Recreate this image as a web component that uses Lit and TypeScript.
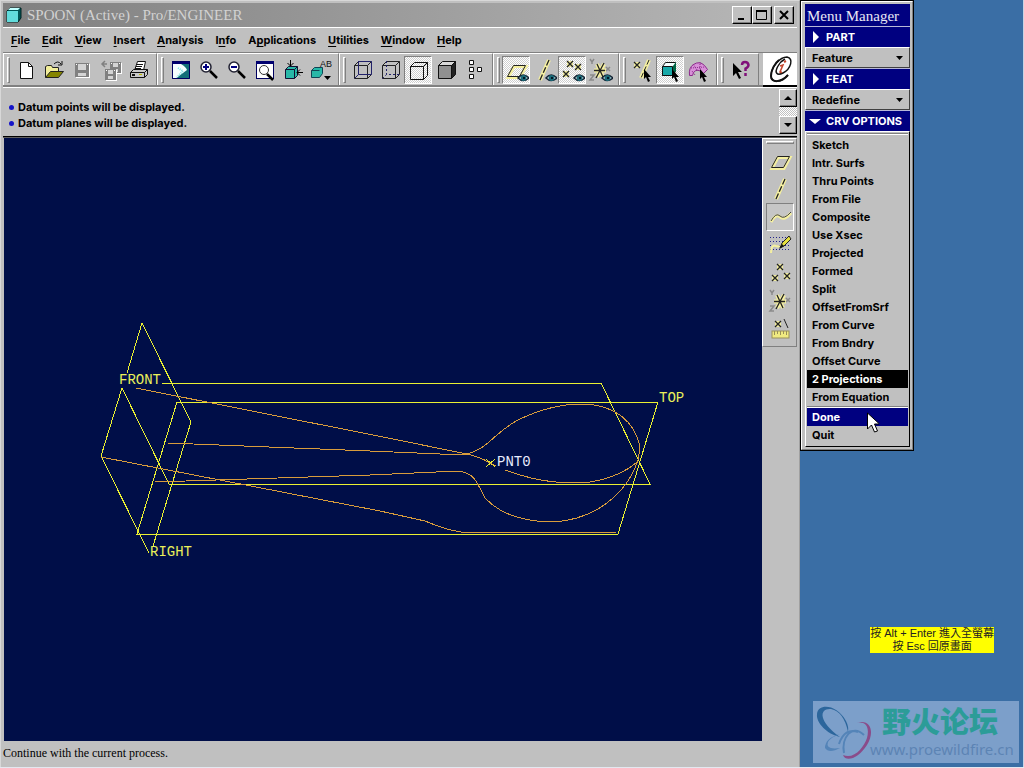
import { LitElement, html, svg, css, nothing, type SVGTemplateResult } from "lit";
import { customElement, property, state } from "lit/decorators.js";
import { classMap } from "lit/directives/class-map.js";

/* ---------- icon artwork, every glyph on a 28 x 28 button face ---------- */

const eye = svg`
  <path d="M16 22Q21 16 27 22Q21 27 16 22Z" fill="#e8f4f4" stroke="#123" stroke-width="1.500"/>
  <circle cx="21.500" cy="22" r="3" fill="#1c6a78"/><rect x="21" y="21" width="2" height="2" fill="#001828"/>`;
const cursor = svg`<path d="M16 13v10l2-2 2 5 2-1-2-4h3z" fill="#000"/>`;

const cross = (x: number, y: number) => svg`
  <rect x="${x}" y="${y}" width="6" height="6" fill="#f1eda0"/>
  <path d="M${x} ${y}l6 6m0-6l-6 6" stroke="#222" stroke-width="1.300" fill="none"/>`;

const axes = svg`
  <path d="M8 14.500h12M11 8l6 13M18 8l-7 13" stroke="#f5f0a0" stroke-width="4" fill="none"/>
  <path d="M8 14.500h11M11 8l6 13M18 7l-8 15" stroke="#222" stroke-width="1.300" fill="none"/>
  <path d="M4 3l2 3 2-3m-2 3v2M20 11l4 4m0-4l-4 4M4 19h4l-4 5h4" stroke="#8a8a8a" fill="none" stroke-width="1.500"/>`;

const disk = (x: number, y: number, s: number) => svg`
  <rect x="${x + 1}" y="${y + 1}" width="${s}" height="${s}" fill="#fff"/>
  <rect x="${x}" y="${y}" width="${s}" height="${s}" fill="#808080"/>
  <rect x="${x + 3}" y="${y + 1}" width="${s - 6}" height="${Math.floor(s / 2) - 1}" fill="#d4d4d4"/>
  <rect x="${x + 3}" y="${y + s - 4}" width="${s - 6}" height="3" fill="#d4d4d4"/>
  <rect x="${x + 1}" y="${y + 1}" width="1" height="1" fill="#fff"/>
  <rect x="${x + s - 2}" y="${y + 1}" width="1" height="1" fill="#fff"/>`;

const lens = (plus: boolean) => svg`
  <circle cx="12" cy="11" r="5" fill="#fff" stroke="#223" stroke-width="1.500"/>
  <path d="M9 11h6" stroke="#000080" stroke-width="2"/>
  ${plus ? svg`<path d="M12 8v6" stroke="#000080" stroke-width="2"/>` : nothing}
  <path d="M16 15l7 7" stroke="#000" stroke-width="2.500"/>`;

const cubeFrame = svg`<path d="M6.500 9.500h13v13h-13zM6.500 9.500l4-4M19.500 9.500l4-4M19.500 22.500l4-4" fill="none" stroke="#222" stroke-width="1"/>`;
const plane = svg`
  <path d="M6 21.500h12l6-11h-12z" fill="none" stroke="#f5f0a0" stroke-width="3"/>
  <path d="M5.500 20.500h12l6-11h-12z" fill="none" stroke="#222" stroke-width="1"/>`;
const axisLine = svg`
  <path d="M19 4l-9 20" stroke="#f5f0a0" stroke-width="4"/>
  <path d="M19 4l-9 20" stroke="#222" stroke-dasharray="6 2" stroke-width="1.300"/>`;

const icons: Record<string, SVGTemplateResult> = {
  blank: svg`<path d="M8.500 6.500h8l4 4v12h-12z" fill="#fff" stroke="#111"/><path d="M16.500 6.500v4h4" fill="none" stroke="#111"/>`,
  open: svg`
    <path d="M5.500 21.500v-11l2-1h4l1 2h6v4" fill="#f2ee9a" stroke="#222"/>
    <path d="M5.500 21.500l5-6h13l-5 6z" fill="#858500" stroke="#222"/>
    <path d="M14 8q4-4 7 0m1-3v4h-4" fill="none" stroke="#111"/>`,
  save: disk(7, 7, 14),
  backup: svg`${disk(14, 6, 11)}${disk(9, 13, 11)}<path d="M6 8h5m-2-3l-3 3 3 3" stroke="#808080" fill="none" stroke-width="1.500"/>`,
  print: svg`
    <path d="M10.500 14.500l3-9h8l-2 9z" fill="#fff" stroke="#111"/>
    <path d="M13 8.500h6m-7 2h6m-7 2h6" stroke="#111"/>
    <path d="M6.500 16.500l3-3h14v5l-3 3h-14z" fill="#c8c8c8" stroke="#111"/>
    <path d="M6.500 16.500h14v5m0-5l3-3" fill="none" stroke="#111"/>
    <rect x="8" y="18" width="3" height="2" fill="#111"/><rect x="15" y="18" width="3" height="1" fill="#bb0"/>`,
  repaint: svg`
    <rect x="6" y="5" width="18" height="18" fill="#127078"/><rect x="6" y="5" width="18" height="3" fill="#000070"/>
    <path d="M7 8h8q5 3 6 6l-12 9H7z" fill="#f6ffff"/><path d="M12 12l5 3-6 6" fill="none" stroke="#7de4e4" stroke-dasharray="1 1" stroke-width="2"/>
    <path d="M6.500 5.500h17v17h-17z" fill="none" stroke="#000060"/>`,
  zoomIn: lens(true),
  zoomOut: lens(false),
  refit: svg`
    <rect x="6.500" y="5.500" width="17" height="17" fill="#fff" stroke="#000060"/><rect x="6" y="5" width="18" height="3" fill="#000070"/>
    <circle cx="14" cy="14" r="4.500" fill="#fff" stroke="#333"/><path d="M17 18l6 6" stroke="#000" stroke-width="2.500"/>`,
  orient: svg`
    <path d="M7.500 13.500l3-3h9v9l-3 3h-9z" fill="#28b8a8" stroke="#113"/><path d="M7.500 13.500h9v9m0-9l3-3" fill="none" stroke="#113"/>
    <path d="M12.500 4v6m-3-3l3 3 3-3M25 16.500h-6m3-3l-3 3 3 3" fill="none" stroke="#000"/>`,
  views: svg`
    <path d="M5.500 14.500l3-3h8v6l-3 4h-8z" fill="#28b8a8" stroke="#145"/><path d="M5.500 14.500h8" stroke="#145"/>
    <path d="M18 20h7l-3.500 4z" fill="#000"/><text x="14" y="11" font-size="9" fill="#111">AB</text>`,
  wire: svg`${cubeFrame}<path d="M10.500 5v13.500h13M6.500 22.500l4-4M10.500 5.500h13v13" fill="none" stroke="#22226a"/>`,
  hidden: svg`${cubeFrame}<path d="M10.500 5.500h13v13" fill="none" stroke="#222"/><path d="M10.500 5v13.500h13M6.500 22.500l4-4" fill="none" stroke="#22226a" stroke-dasharray="2 2"/>`,
  noHidden: svg`<path d="M6.500 10.500h13v13h-13zM6.500 10.500l4-4M19.500 10.500l4-4M19.500 23.500l4-4M10.500 6.500h13v13" fill="none" stroke="#111"/>`,
  shade: svg`
    <path d="M6.500 9.500l4-4h13l-4 4z" fill="#d8d8d8" stroke="#111"/><path d="M19.500 9.500l4-4v13l-4 4z" fill="#222" stroke="#111"/>
    <path d="M6.500 9.500h13v13h-13z" fill="#909090" stroke="#111"/>`,
  tree: svg`<path d="M9.500 4.500h4v4h-4zM9.500 11.500h4v4h-4zM9.500 18.500h4v4h-4zM17.500 11.500h4v4h-4z" fill="#fff" stroke="#111"/>`,
  planeEye: svg`${plane}${eye}`,
  axisEye: svg`${axisLine}${eye}`,
  pointEye: svg`${cross(9, 5)}${cross(17, 8)}${cross(5, 15)}${eye}`,
  csysEye: svg`${axes}${eye}`,
  pickDatum: svg`${cross(6, 6)}<path d="M21 4l-8 18" stroke="#f5f0a0" stroke-width="4"/><path d="M21 4l-8 18" stroke="#222" stroke-dasharray="5 2"/>${cursor}`,
  pickPart: svg`
    <path d="M6.500 10.500l3-4h10v9l-3 4h-10z" fill="#f4ffff" stroke="#111"/><path d="M6.500 10.500h10v9h-10z" fill="#18a8a8" stroke="#111"/>
    <path d="M17 10l3-4v9l-3 4z" fill="#064"/>${cursor}`,
  pickSurface: svg`
    <path d="M5.500 19.500q-1-8 4-11q6-4 11 1l3 4-4 4q-6-6-10-1l-1 3z" fill="#d890d8" stroke="#8c2a8c"/>
    <path d="M7 12l14-1M9 8l4 6m3-8v7m-8 2l3 4" fill="none" stroke="#8c2a8c" stroke-dasharray="1 1"/>${cursor}`,
  help: svg`<path d="M7 7v13l3-3 3 6 2-1-3-6h4z" fill="#000"/><path d="M16 9q0-3 3-3t3.500 3q0 2-3 3.500V15m0 2v3" fill="none" stroke="#80107a" stroke-width="2.500"/>`,
  plane,
  axisLine,
  curve: svg`<path d="M5 19q5-9 9-5t11-4" fill="none" stroke="#f5f0a0" stroke-width="3"/><path d="M5 18q5-9 9-5t11-4" fill="none" stroke="#444"/>`,
  sketchCurve: svg`
    <path d="M4 6.500h20M4 10.500h20M4 14.500h20M4 18.500h20" stroke="#22228a" stroke-dasharray="1 2"/>
    <path d="M5 22q0-9 5-7t9-3" fill="none" stroke="#f5f0a0" stroke-width="2"/>
    <path d="M14 17l2-5 7-7 2 3-7 7z" fill="#e6e040" stroke="#222"/><path d="M13 18l3-5 2 2z" fill="#111"/>`,
  points: svg`${cross(11, 5)}${cross(6, 16)}${cross(18, 14)}`,
  csys: axes,
  analysis: svg`${cross(9, 6)}<path d="M18 4l4 9" stroke="#222"/>
    <rect x="6" y="16" width="17" height="7" fill="#f0ea80" stroke="#99905a"/><path d="M8.500 16v4m3-4v3m3-3v4m3-4v3m3-3v4" stroke="#99905a"/>`,
};

@customElement("tool-button")
class ToolButton extends LitElement {
  static styles = css`
    :host { display: block; }
    .face {
      display: block; box-sizing: border-box; width: 28px; height: 28px; padding: 0; margin: 0;
      border: 1px solid transparent; background: none; overflow: hidden;
    }
    .face.on {
      border-color: #808080 #fff #fff #808080;
      background: repeating-conic-gradient(#fff 0 25%, #cfcfcf 0 50%) 0 0 / 2px 2px;
    }
    .face.on.flat { background: #c6c6c6; }
    svg { display: block; width: 28px; height: 28px; margin: -1px; }
    text { font-family: "Liberation Sans", Arial, sans-serif; }
  `;
  @property() icon = "blank";
  @property() label = "";
  @property({ type: Boolean }) on = false;
  @property({ type: Boolean }) flat = false;
  render() {
    return html`<button class=${classMap({ face: true, on: this.on, flat: this.flat })} type="button"
      aria-label=${this.label} aria-pressed=${this.on ? "true" : "false"}>
      <svg viewBox="0 0 28 28" aria-hidden="true">${icons[this.icon]}</svg>
    </button>`;
  }
}

/* ---------- 3D view ---------- */

@customElement("model-view")
class ModelView extends LitElement {
  static styles = css`
    :host { display: block; background: #000e48; overflow: hidden; }
    svg { display: block; width: 100%; height: 100%; }
    .datum { fill: none; stroke: #eaf032; stroke-width: 1; shape-rendering: crispEdges; }
    .curve { fill: none; stroke: #d99c3c; stroke-width: 1; shape-rendering: crispEdges; }
    .tag { fill: #eaf05a; font: 14px "Liberation Mono", "Courier New", monospace; }
    .point { fill: #e8ecff; }
  `;
  render() {
    return html`<svg viewBox="4 138 758 603" role="img" aria-label="Spoon curves with datum planes">
      <g class="datum">
        <path d="M127 373L142 323L191 422L153 546"/>
        <path d="M149 553L101 456L122 388L169 484H650L601 383H162"/>
        <path d="M177 402H658L618 534H137Z"/>
        <path d="M486 459l9 8m0-8l-9 8"/>
      </g>
      <g class="curve">
        <path d="M136 388L378 436L467 454Q480 457 490 463L496 466"/>
        <path d="M168 443L370 451L440 454H467C490 448 495 431 520 419C537 411 557 404 582 404C618 405 634 424 639 443Q640 452 638 460C627 494 594 521 550 522C518 521 497 511 485 498C477 484 476 473 458 471L370 475L155 482"/>
        <path d="M505 470C540 483 566 484 590 482Q620 477 637 462"/>
        <path d="M101 457L380 511L425 521Q446 530 461 532H616"/>
      </g>
      <text class="tag" x="119" y="384">FRONT</text>
      <text class="tag" x="659" y="402">TOP</text>
      <text class="tag" x="150" y="556">RIGHT</text>
      <text class="tag point" x="497" y="466">PNT0</text>
    </svg>`;
  }
}

/* ---------- menu manager ---------- */

@customElement("menu-manager")
class MenuManager extends LitElement {
  static styles = css`
    :host {
      display: block; box-sizing: border-box; border: 1px solid #000; background: #c0c0c0;
      font: bold 11px/18px Inter, "Liberation Sans", sans-serif; color: #000;
    }
    .frame { border: 1px solid #fff; border-right-color: #808080; border-bottom-color: #808080; padding: 2px 2px 2px 3px; }
    .title {
      margin: 0; height: 22px; background: #000080; color: #e8e8f4; padding: 0 2px;
      font: 15px/24px "Liberation Serif", "Times New Roman", serif; white-space: nowrap;
    }
    .head {
      display: flex; align-items: center; gap: 5px; margin: 0; height: 20px; padding-left: 4px;
      border-top: 1px solid #b8b8d8; background: #000080; color: #fff; white-space: nowrap;
    }
    .mark { flex: none; width: 12px; height: 12px; fill: #fff; }
    .pick { position: relative; }
    select {
      display: block; appearance: none; box-sizing: border-box; width: 100%; height: 21px; margin: 0;
      padding: 0 6px; border: 1px solid; border-color: #fff #404040 #404040 #fff; border-radius: 0;
      background: #c0c0c0; color: #000; font: inherit; outline: none;
    }
    .arrow { position: absolute; right: 7px; top: 9px; width: 7px; height: 4px; fill: #000; pointer-events: none; }
    .list {
      margin: 0; padding: 1px 1px 2px; list-style: none;
      border: 1px solid; border-color: #fff #000 #000 #fff;
    }
    .list::before { content: ""; display: block; height: 1px; margin-bottom: 1px; border-top: 1px solid #808080; background: #fff; }
    .row { display: block; box-sizing: border-box; width: 100%; height: 18px; margin: 0; padding: 0 5px; border: 0;
      background: none; color: inherit; font: inherit; text-align: left; white-space: nowrap; }
    .chosen { background: #000; color: #fff; }
    .hover { background: #000080; color: #fff; }
    .rule { height: 1px; border-top: 1px solid #808080; background: #fff; }
  `;
  @state() private options = [
    "Sketch", "Intr. Surfs", "Thru Points", "From File", "Composite", "Use Xsec", "Projected", "Formed",
    "Split", "OffsetFromSrf", "From Curve", "From Bndry", "Offset Curve", "2 Projections", "From Equation",
  ];
  @state() private chosen = "2 Projections";

  private mark(open = false) {
    return html`<svg class="mark" viewBox="0 0 12 12" aria-hidden="true"><path d=${open ? "M0 4h12l-6 5z" : "M4 0v12l6-6z"}/></svg>`;
  }
  private pick(id: string, title: string, value: string) {
    return html`<label class="head" for=${id}>${this.mark()}${title}</label>
      <div class="pick"><select id=${id}><option>${value}</option></select>
      <svg class="arrow" viewBox="0 0 7 4" aria-hidden="true"><path d="M0 0h7l-3.500 4z"/></svg></div>`;
  }
  render() {
    return html`<div class="frame">
      <h1 class="title">Menu Manager</h1>
      ${this.pick("part", "PART", "Feature")}
      ${this.pick("feat", "FEAT", "Redefine")}
      <div class="head">${this.mark(true)}CRV OPTIONS</div>
      <ul class="list">
        ${this.options.map((o) => html`<li><button type="button" class=${classMap({ row: true, chosen: o === this.chosen })}
          @click=${() => (this.chosen = o)}>${o}</button></li>`)}
        <li class="rule" role="separator"></li>
        <li><button type="button" class="row hover">Done</button></li>
        <li><button type="button" class="row">Quit</button></li>
      </ul>
    </div>`;
  }
}

/* ---------- application ---------- */

type Tool = [icon: string, label: string, on?: boolean];

const toolGroups: Tool[][] = [
  [["blank", "New"], ["open", "Open"], ["save", "Save"], ["backup", "Save a copy"], ["print", "Print"]],
  [["repaint", "Repaint"], ["zoomIn", "Zoom in"], ["zoomOut", "Zoom out"], ["refit", "Refit"], ["orient", "Orient"], ["views", "Saved views"]],
  [["wire", "Wireframe"], ["hidden", "Hidden line"], ["noHidden", "No hidden", true], ["shade", "Shading"], ["tree", "Model tree"]],
  [["planeEye", "Datum planes", true], ["axisEye", "Datum axes"], ["pointEye", "Datum points", true], ["csysEye", "Coordinate systems"]],
  [["pickDatum", "Select datums"], ["pickPart", "Select parts", true], ["pickSurface", "Select surfaces"]],
  [["help", "Context help"]],
];
const sideTools: Tool[] = [
  ["plane", "Insert plane"], ["axisLine", "Insert axis"], ["curve", "Insert curve", true], ["sketchCurve", "Sketched curve"],
  ["points", "Insert points"], ["csys", "Insert coordinate system"], ["analysis", "Analysis feature"],
];
/* label before the access key, the key, the rest */
const menus = [
  ["", "F", "ile"], ["", "E", "dit"], ["", "V", "iew"], ["", "I", "nsert"], ["", "A", "nalysis"], ["I", "n", "fo"],
  ["A", "p", "plications"], ["", "U", "tilities"], ["", "W", "indow"], ["", "H", "elp"],
];

@customElement("app-root")
class AppRoot extends LitElement {
  static styles = css`
    :host {
      display: grid; grid-template-columns: minmax(0, 1fr) 224px; box-sizing: border-box; height: 100vh;
      border-bottom: 1px solid #e4e8f0; background: #3a6ea5; overflow: hidden;
      font: bold 11px/16px Inter, "Liberation Sans", sans-serif; color: #000;
    }
    button { font: inherit; color: inherit; margin: 0; border-radius: 0; }
    .window {
      display: flex; flex-direction: column; min-width: 0; min-height: 0; box-sizing: border-box;
      padding: 2px 2px 0 2px; border: solid; border-width: 1px 1px 0 1px; border-color: #d8d8d8 #a0a0a0 #a0a0a0 #d8d8d8; background: #c0c0c0;
    }
    .titlebar {
      display: flex; align-items: center; height: 24px; padding: 0 3px 0 3px; box-sizing: border-box;
      background: linear-gradient(90deg, #808080, #b8b8b8);
    }
    .app-icon { width: 16px; height: 16px; margin-right: 5px; }
    .caption { flex: 1; margin: 0; color: #d2d2d2; font: 15px/26px "Liberation Serif", "Times New Roman", serif; white-space: nowrap; }
    .win-btn {
      box-sizing: border-box; width: 20px; height: 18px; padding: 0; background: #c0c0c0;
      border: 1px solid; border-color: #fff #000 #000 #fff; box-shadow: inset -1px -1px #808080;
    }
    .win-btn svg { display: block; width: 18px; height: 16px; fill: none; stroke: #000; }
    .close { margin-left: 2px; }
    .menubar { display: flex; height: 25px; box-sizing: border-box; padding: 0 2px; border-top: 1px solid #fff; align-items: center; }
    .menu { padding: 0 6px; border: 0; background: none; white-space: nowrap; }
    .menu u { text-decoration: underline; text-underline-offset: 2px; text-decoration-thickness: 1px; }
    .toolbar { display: flex; height: 35px; box-sizing: border-box; border-top: 1px solid #808080; border-bottom: 2px solid #808080; }
    .group {
      display: flex; align-items: center; box-sizing: border-box; padding: 0 4px 0 3px;
      border: solid; border-width: 1px 1px 0 1px; border-color: #fff #808080 #808080 #fff;
    }
    .grip { box-sizing: border-box; width: 3px; height: 26px; margin-right: 2px; border: 1px solid; border-color: #fff #808080 #808080 #fff; }
    .brand { margin-left: auto; width: 34px; background: #fff; box-shadow: 0 2px #000; }
    .brand svg { display: block; width: 34px; height: 32px; }
    .messages { display: flex; height: 50px; box-sizing: border-box; border-top: 1px solid #fff; border-bottom: 1px solid #000; }
    .log { flex: 1; margin: 0; padding: 11px 0 0 6px; list-style: none; }
    .log li { display: flex; align-items: center; gap: 4px; height: 16px; }
    .dot { width: 5px; height: 5px; border-radius: 50%; background: #1414c8; }
    .scroll {
      display: flex; flex-direction: column; justify-content: space-between; width: 18px; height: 45px; margin-top: 1px;
      background: repeating-conic-gradient(#fff 0 25%, #c0c0c0 0 50%) 0 0 / 2px 2px;
    }
    .scroll .win-btn { width: 18px; }
    .scroll svg { width: 16px; fill: #000; stroke: none; }
    .work { display: flex; flex: 1; min-height: 0; padding-left: 1px; border-top: 1px solid #606060; }
    model-view { flex: 1; min-width: 0; }
    .side {
      display: flex; flex-direction: column; align-items: center; align-self: flex-start; box-sizing: border-box;
      width: 35px; padding: 2px 2px 3px 3px; border: 1px solid; border-color: #fff #808080 #808080 #fff;
    }
    .side-grip { box-sizing: border-box; width: 28px; height: 3px; margin-bottom: 3px; border: 1px solid; border-color: #fff #808080 #808080 #fff; }
    .status { margin: 0; height: 26px; font: 12px/24px "Liberation Serif", "Times New Roman", serif; }
    .desktop { display: flex; flex-direction: column; min-height: 0; padding-right: 4px; border-right: 1px solid #c8d4e4; }
    menu-manager { width: 114px; }
    .note {
      align-self: flex-end; box-sizing: border-box; margin: auto 25px 48px 0; padding: 0; background: #ff0; color: #222;
      font: 11px/13px "Liberation Sans", "Noto Sans CJK TC", sans-serif; text-align: center; white-space: nowrap;
    }
    .mark { display: flex; align-self: flex-end; width: 206px; height: 62px; margin-bottom: 4px; background: #7c9fca; }
    .mark svg { flex: none; width: 60px; height: 62px; margin-right: -3px; fill: none; }
    .names { display: flex; flex-direction: column; white-space: nowrap; }
    .forum { padding-left: 12px; color: #2c9c98; font: 900 29px/38px "Noto Sans CJK SC", sans-serif; }
    .site { color: #5c84b4; font: 15px/20px "Noto Sans", sans-serif; text-decoration: none; }
    .pointer { position: absolute; left: calc(100vw - 157px); top: 412px; width: 12px; height: 21px; pointer-events: none; }
  `;

  private tools(list: Tool[], flat = false) {
    return list.map(([icon, label, on]) => html`<tool-button icon=${icon} label=${label} ?on=${!!on} ?flat=${flat && !!on}></tool-button>`);
  }

  render() {
    return html`
      <main class="window">
        <header class="titlebar">
          <svg class="app-icon" viewBox="0 0 16 16" aria-hidden="true">
            <path d="M1 4l3-3h11v10l-3 4H1z" fill="#055" stroke="#022"/><path d="M1 4h11v11H1z" fill="#62dcdc"/><path d="M2 3l2-2h10l-2 2z" fill="#c0ffff"/>
          </svg>
          <h1 class="caption">SPOON (Active) - Pro/ENGINEER</h1>
          <button class="win-btn" type="button" aria-label="Minimize"><svg viewBox="0 0 18 16"><path d="M5 12h6" stroke-width="2"/></svg></button>
          <button class="win-btn" type="button" aria-label="Maximize"><svg viewBox="0 0 18 16"><path d="M3.500 3v9.500h10V3"/><path d="M3 4h11" stroke-width="2"/></svg></button>
          <button class="win-btn close" type="button" aria-label="Close"><svg viewBox="0 0 18 16"><path d="M5 4l8 8m0-8l-8 8" stroke-width="2"/></svg></button>
        </header>
        <nav class="menubar">
          ${menus.map(([a, k, b]) => html`<button class="menu" type="button">${a}<u>${k}</u>${b}</button>`)}
        </nav>
        <div class="toolbar" role="toolbar">
          ${toolGroups.map((g) => html`<div class="group"><span class="grip"></span>${this.tools(g)}</div>`)}
          <div class="brand"><svg viewBox="0 0 34 32" aria-hidden="true">
            <path d="M25 22C18 30 8 30 8 23C8 14 17 4 24 4C31 5 28 16 20 20C14 23 11 20 15 13C17 9 20 7 22 6" fill="none" stroke="#111" stroke-width="1.500"/>
            <path d="M25 22C18 30 8 30 8 23C8 17 12 10 16 7" fill="none" stroke="#111" stroke-width="2"/>
            <path d="M17 13l3-1-3 7q0 1 2 0" fill="none" stroke="#c4452c" stroke-width="1.500"/><path d="M21 9l2-1" stroke="#c4452c" stroke-width="2"/>
          </svg></div>
        </div>
        <section class="messages">
          <ul class="log">
            <li><span class="dot"></span>Datum points will be displayed.</li>
            <li><span class="dot"></span>Datum planes will be displayed.</li>
          </ul>
          <div class="scroll">
            <button class="win-btn" type="button" aria-label="Scroll up"><svg viewBox="0 0 16 16"><path d="M4 10h8l-4-4z"/></svg></button>
            <button class="win-btn" type="button" aria-label="Scroll down"><svg viewBox="0 0 16 16"><path d="M4 6h8l-4 4z"/></svg></button>
          </div>
        </section>
        <div class="work">
          <model-view></model-view>
          <div class="side" role="toolbar"><span class="side-grip"></span>${this.tools(sideTools, true)}</div>
        </div>
        <p class="status">Continue with the current process.</p>
      </main>
      <aside class="desktop">
        <menu-manager></menu-manager>
        <p class="note">按 Alt + Enter 進入全螢幕<br>按 Esc 回原畫面</p>
        <div class="mark">
          <svg viewBox="0 0 60 62" aria-hidden="true">
            <path d="M27 36C14 33 3 22 4 13C5 2 24 3 33 20Q36 26 35 31Q31 11 18 8C6 7 5 20 27 36Z" fill="#2c669c"/>
            <path d="M43 22C58 17 62 31 54 44C46 57 33 62 30 54C41 59 51 46 54 37C57 25 52 20 43 22Z" fill="#8a4c8a"/>
            <path d="M27 33Q12 37 12 47Q16 53 27 47Q12 49 15 41Q18 36 27 33Z" fill="#5484b8"/>
            <path d="M51 34C39 22 28 37 31 52M26 43C30 31 37 28 45 31" stroke="#5484b8" stroke-width="2"/>
          </svg>
          <div class="names"><span class="forum">野火论坛</span><a class="site" href="#">www.proewildfire.cn</a></div>
        </div>
      </aside>
      <svg class="pointer" viewBox="0 0 12 21" aria-hidden="true"><path d="M.500 1v16l4-4 3 7 3-1-3-7h5z" fill="#fff" stroke="#000"/></svg>
    `;
  }
}
